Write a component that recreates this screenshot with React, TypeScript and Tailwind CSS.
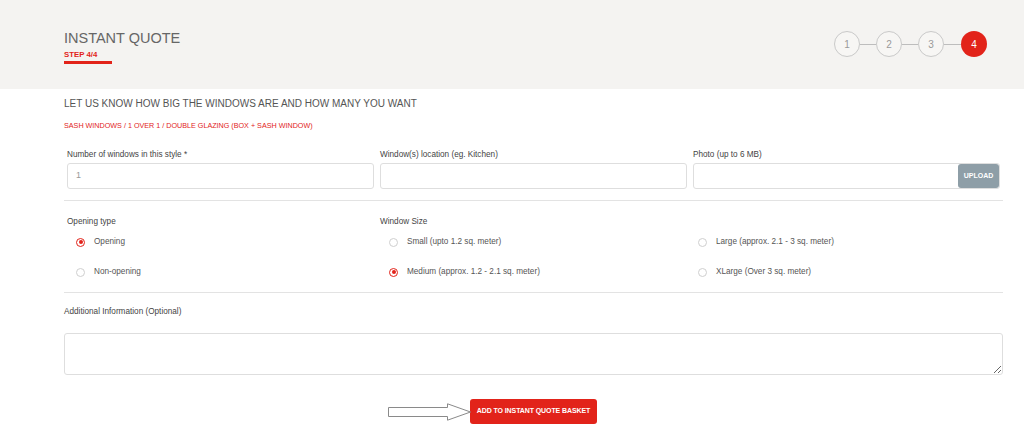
import React from 'react'

const font = { fontFamily: '"Liberation Sans", Arial, sans-serif' }

const Radio: React.FC<{ checked?: boolean; label: string }> = ({ checked, label }) => (
  <div className="flex h-[30px] items-center pl-[9px]">
    <span
      className={
        'flex h-[9px] w-[9px] items-center justify-center rounded-full border bg-white ' +
        (checked ? 'border-[#e2231a]' : 'border-[#cfcfcf]')
      }
    >
      {checked && <span className="h-[4px] w-[4px] rounded-full bg-[#e2231a]" />}
    </span>
    <span className="ml-[9px] text-[8.2px] leading-[10px] text-[#555]">{label}</span>
  </div>
)

const Step: React.FC<{ n: number; active?: boolean }> = ({ n, active }) => (
  <div
    className={
      'flex h-[26px] w-[26px] items-center justify-center rounded-full text-[10px] ' +
      (active
        ? 'bg-[#e2231a] text-white'
        : 'border border-[#c9c9c9] bg-[#f7f6f4] text-[#9a9a9a]')
    }
  >
    {n}
  </div>
)

export default function App() {
  return (
    <div className="h-[428px] w-[1024px] overflow-hidden bg-white" style={font}>
      {/* header */}
      <div className="flex h-[89px] items-start justify-between bg-[#f4f3f1] pl-[64px] pr-[37px]">
        <div className="pt-[29px]">
          <div className="text-[14.5px] leading-[18px] text-[#666]">INSTANT QUOTE</div>
          <div className="mt-[3px] text-[7.8px] font-bold leading-[9px] text-[#e2231a]">STEP 4/4</div>
          <div className="mt-[2px] h-[3px] w-[48px] bg-[#e2231a]" />
        </div>
        <div className="flex items-center pt-[31px]">
          <Step n={1} />
          <div className="h-px w-[16px] bg-[#bdbdbd]" />
          <Step n={2} />
          <div className="h-px w-[16px] bg-[#bdbdbd]" />
          <Step n={3} />
          <div className="h-px w-[17px] bg-[#bdbdbd]" />
          <Step n={4} active />
        </div>
      </div>

      {/* body */}
      <div className="ml-[64px] w-[939px]">
        <h2 className="mt-[8px] text-[10px] leading-[14px] text-[#555]">
          LET US KNOW HOW BIG THE WINDOWS ARE AND HOW MANY YOU WANT
        </h2>
        <div className="mt-[10px] text-[7.2px] leading-[10px] text-[#e2231a]">
          SASH WINDOWS / 1 OVER 1 / DOUBLE GLAZING (BOX + SASH WINDOW)
        </div>

        <div className="mt-[19px] grid grid-cols-3 gap-[6px] px-[3px]">
          <div>
            <div className="text-[8.2px] leading-[10px] text-[#444]">Number of windows in this style *</div>
            <div className="mt-[3px] flex h-[26px] items-center rounded-[3px] border border-[#dedede] pl-[8px] text-[9px] text-[#999]">
              1
            </div>
          </div>
          <div>
            <div className="text-[8.2px] leading-[10px] text-[#444]">Window(s) location (eg. Kitchen)</div>
            <div className="mt-[3px] h-[26px] rounded-[3px] border border-[#dedede]" />
          </div>
          <div>
            <div className="text-[8.2px] leading-[10px] text-[#444]">Photo (up to 6 MB)</div>
            <div className="mt-[3px] flex h-[26px] justify-end rounded-[3px] border border-[#dedede]">
              <div className="flex w-[41px] items-center justify-center rounded-[3px] bg-[#8e9ea7] text-[7px] font-bold text-white">
                UPLOAD
              </div>
            </div>
          </div>
        </div>

        <div className="mt-[11px] h-px bg-[#e3e3e3]" />

        <div className="mt-[16px] grid grid-cols-3 gap-[6px] px-[3px]">
          <div>
            <div className="text-[8.2px] leading-[10px] text-[#444]">Opening type</div>
            <Radio checked label="Opening" />
            <Radio label="Non-opening" />
          </div>
          <div>
            <div className="text-[8.2px] leading-[10px] text-[#444]">Window Size</div>
            <Radio label="Small (upto 1.2 sq. meter)" />
            <Radio checked label="Medium (approx. 1.2 - 2.1 sq. meter)" />
          </div>
          <div>
            <div className="h-[10px]" />
            <div className="-ml-[4px]">
              <Radio label="Large (approx. 2.1 - 3 sq. meter)" />
              <Radio label="XLarge (Over 3 sq. meter)" />
            </div>
          </div>
        </div>

        <div className="mt-[5px] h-px bg-[#e3e3e3]" />

        <div className="mt-[14px] text-[8.2px] leading-[10px] text-[#444]">Additional Information (Optional)</div>
        <textarea className="mt-[16px] block h-[42px] w-full rounded-[3px] border border-[#dedede] outline-none" />

        <div className="mt-[24px] flex justify-center">
          <div className="relative">
            <svg
              width="84"
              height="18"
              viewBox="0 0 84 18"
              className="absolute right-full top-[4px] mr-[-2px]"
            >
              <path
                d="M0.5 4.5 H59.5 V0.8 L82.5 9 L59.5 17.2 V13.5 H0.5 Z"
                fill="#fff"
                stroke="#8a8a8a"
                strokeWidth="1"
              />
            </svg>
            <button className="flex h-[25px] w-[127px] items-center justify-center rounded-[3px] bg-[#e2231a] text-[7px] font-bold tracking-[-0.1px] text-white">
              ADD TO INSTANT QUOTE BASKET
            </button>
          </div>
        </div>
      </div>
    </div>
  )
}
